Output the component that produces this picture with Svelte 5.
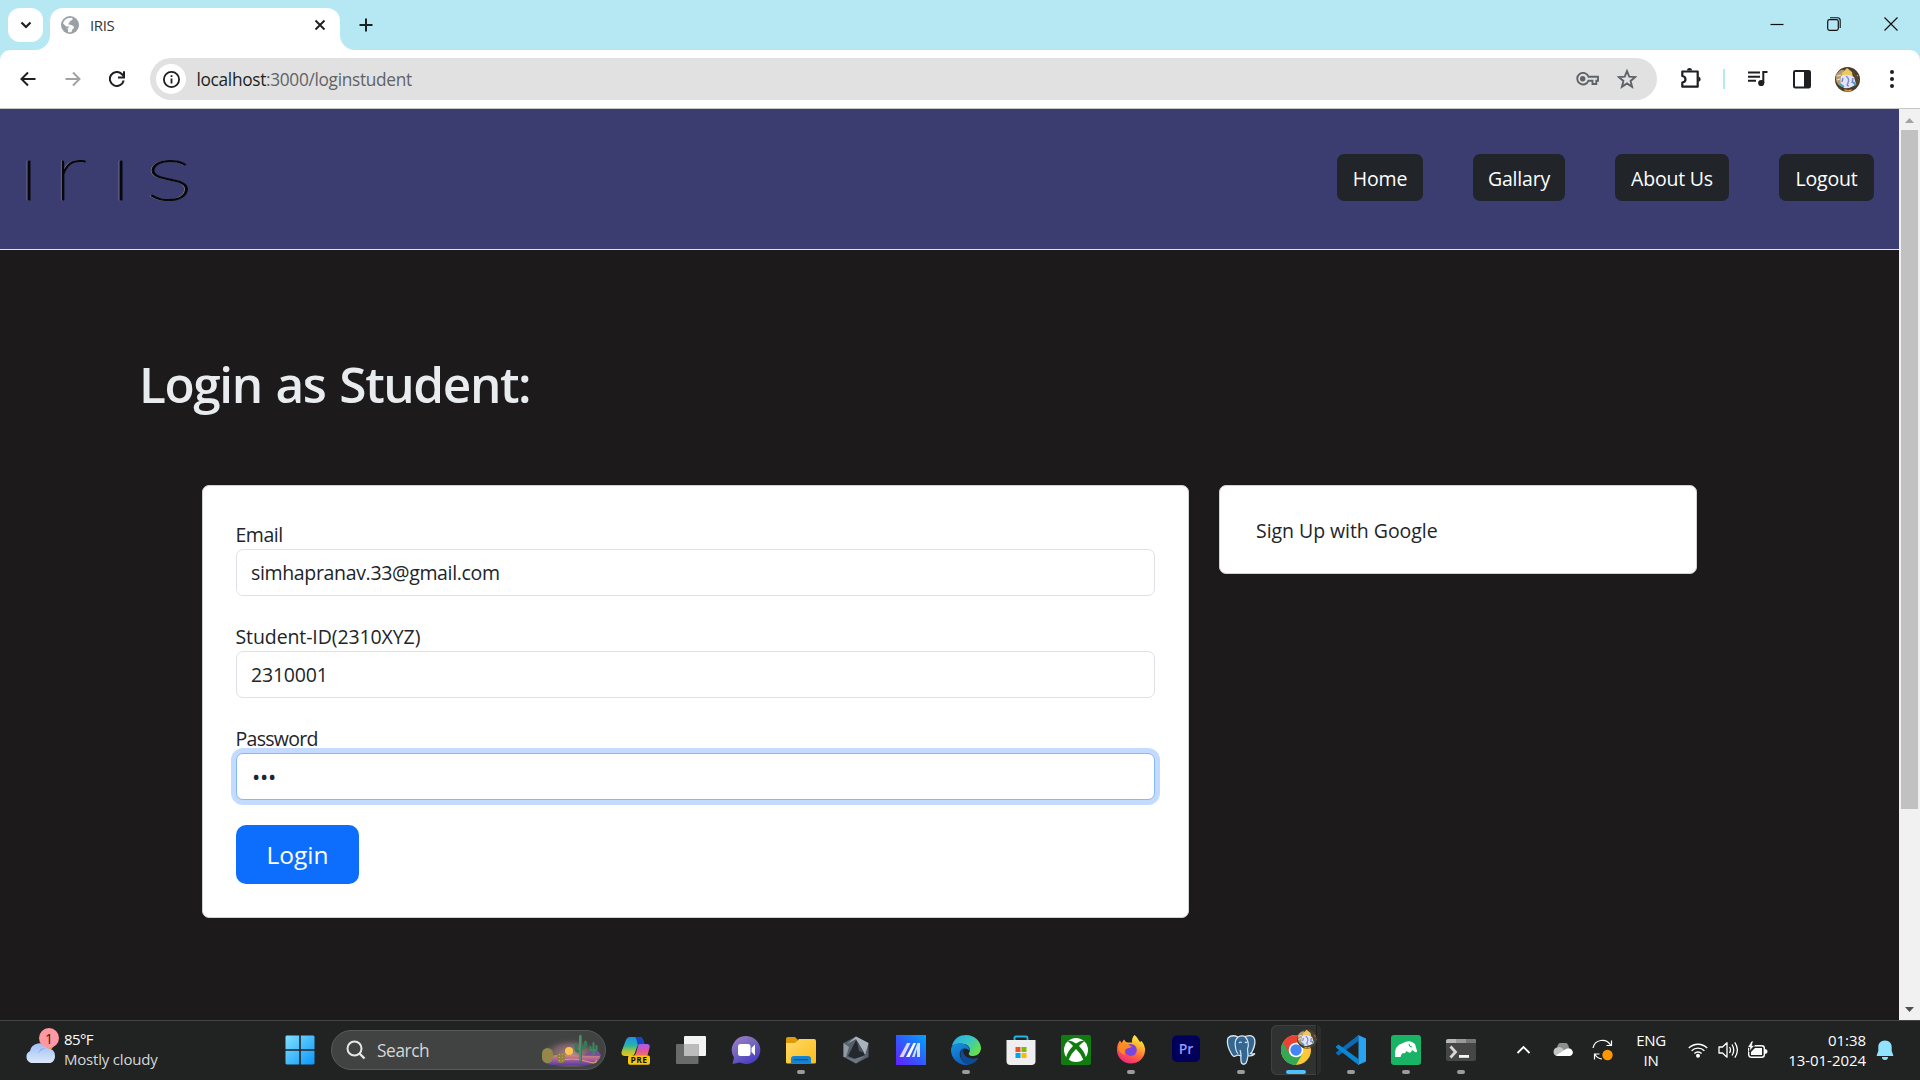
<script>
  const links = [
    { label: 'Home', cls: 'home' },
    { label: 'Gallary', cls: 'gallary' },
    { label: 'About Us', cls: 'about' },
    { label: 'Logout', cls: 'logout' }
  ];
  const fields = [
    { label: 'Email', value: 'simhapranav.33@gmail.com', cls: 'email' },
    { label: 'Student-ID(2310XYZ)', value: '2310001', cls: 'sid' },
    { label: 'Password', value: '•••', cls: 'focused' }
  ];
  const apps = [
    { id: 'copilot' }, { id: 'taskview' }, { id: 'chat' }, { id: 'files', open: true },
    { id: 'armoury' }, { id: 'myasus' }, { id: 'edge', open: true }, { id: 'store' },
    { id: 'xbox' }, { id: 'firefox', open: true }, { id: 'premiere' }, { id: 'postgres', open: true },
    { id: 'chrome', active: true }, { id: 'vscode', open: true }, { id: 'moqups', open: true }, { id: 'terminal', open: true }
  ];
</script>

{#snippet portrait()}
  <circle cx="12.5" cy="12.5" r="12.5" fill="#4a3c2c" />
  <path d="M1 8Q5 2 9 3L7 20Q2 18 1 13Z" fill="#b39a72" />
  <path d="M2 9L6 8M2 13L5 12M19 8L23 9M20 13H24" stroke="#efe3cd" stroke-width="1.200" />
  <path d="M18 4Q24 9 24 15L18 22Z" fill="#54452d" />
  <path d="M7 6L12 1L17 5L18 11L7 10Z" fill="#ecc860" />
  <path d="M6 9Q12 6 19 10L21 17Q16 22 9 21Q4 18 6 9Z" fill="#e2e5f8" />
  <path d="M11 9Q15 12 13 16Q11 19 14 19M8 11L7 15M18 11L17 16" stroke="#8088cd" stroke-width="1.500" fill="none" />
  <path d="M5 17L9 20M18 15L21 18" stroke="#47a0bd" stroke-width="2" />
  <path d="M9 22Q13 24 17 22L16 24.500H10Z" fill="#dd9b37" />
{/snippet}

{#snippet appIcon(id)}
  <svg class="app-svg" viewBox="0 0 30 30">
    {#if id === 'copilot'}
      <defs>
        <linearGradient id="cpA" x1="0" y1="0" x2="0" y2="1"><stop offset="0" stop-color="#1f8fe8" /><stop offset=".45" stop-color="#2bb3a5" /><stop offset=".75" stop-color="#a8c838" /><stop offset="1" stop-color="#f2c21b" /></linearGradient>
        <linearGradient id="cpB" x1="0" y1="0" x2="0" y2="1"><stop offset="0" stop-color="#a45cf0" /><stop offset=".5" stop-color="#e0559e" /><stop offset="1" stop-color="#f5794c" /></linearGradient>
      </defs>
      <path d="M9 2H19Q21 2 22 5L23.500 9H19Q17 9 16 12L13.500 19Q13 21 10 21H4Q-.5 21 .8 16L4.500 6Q6 2 9 2Z" fill="url(#cpA)" />
      <path d="M14 2H19Q21 2 22 5L23.500 9H19Q17 9 16.500 10Q16 4 14 2Z" fill="#1746c4" />
      <path d="M19 9H26Q29.500 9 28.500 13L26 22H12Q14 21 15 18L17 11Q17.500 9 19 9Z" fill="url(#cpB)" />
      <rect x="7" y="20.500" width="22" height="9.300" rx="2" fill="#fcc70d" />
      <text x="18" y="28.200" class="pre">PRE</text>
    {:else if id === 'taskview'}
      <rect x="8" y="1" width="22" height="20" rx="1" fill="#f3f3f3" />
      <rect x="0" y="9" width="22.500" height="20" rx="1" fill="#6a6a6a" />
      <rect x="8" y="9" width="14.500" height="12" fill="#bcbcbc" />
    {:else if id === 'chat'}
      <defs><linearGradient id="ch" x1="0" y1="0" x2=".6" y2="1"><stop offset="0" stop-color="#9f80c8" /><stop offset=".5" stop-color="#7468bd" /><stop offset="1" stop-color="#4a3fc0" /></linearGradient></defs>
      <path d="M15.500 1A14 14 0 1 1 9 27.500L1.500 29L3 22.500A14 14 0 0 1 15.500 1Z" fill="url(#ch)" />
      <rect x="7" y="9" width="12.500" height="12" rx="2.500" fill="#fff" />
      <path d="M20.500 13L24 9.500V20.500L20.500 17Z" fill="#fff" />
    {:else if id === 'files'}
      <defs><linearGradient id="fo" x1="0" y1="0" x2="1" y2="1"><stop offset="0" stop-color="#ffd965" /><stop offset="1" stop-color="#fbbd1e" /></linearGradient></defs>
      <path d="M0 4Q0 2 2 2H9L12 5L9 9H0Z" fill="#dd9a0a" />
      <path d="M0 8H9L13 4H28Q30 4 30 6V27Q30 28.500 28.500 28.500H1.500Q0 28.500 0 27Z" fill="url(#fo)" />
      <path d="M5 28.500V24Q5 21 8 21H22Q25 21 25 24V28.500Z" fill="#1583d2" />
      <rect x="8" y="24" width="14" height="1.200" rx=".6" fill="#0b5291" />
    {:else if id === 'armoury'}
      <path d="M15 1.500L27.500 8V22L15 28.500L2.500 22V8Z" fill="#56606b" />
      <path d="M15 1.500L27.500 8L24 20L15 4L6 9Z" fill="#aab3bd" />
      <path d="M2.500 8L8 12L5 22L2.500 22Z" fill="#9099a4" />
      <path d="M15 5L7 21L14 24L24 20Z" fill="#23282e" />
      <path d="M16 6L23.500 18L18 16Z" fill="#4b535d" />
      <path d="M4 22L13 24L24 21L15 28.500Z" fill="#6d7782" />
    {:else if id === 'myasus'}
      <defs><linearGradient id="ma" x1="0" y1="1" x2="1" y2="0"><stop offset="0" stop-color="#6420ff" /><stop offset=".5" stop-color="#305cff" /><stop offset="1" stop-color="#00a5ff" /></linearGradient></defs>
      <rect width="30" height="30" fill="url(#ma)" />
      <path d="M3.500 22L11 8H14.500L7.500 22Z" fill="#ddd8ff" />
      <path d="M10 22L17.500 8H20L13.500 22Z" fill="#fff" />
      <path d="M16 22L21.500 8H24V22H21V14L18.500 22Z" fill="#cfe2ff" />
    {:else if id === 'edge'}
      <defs>
        <linearGradient id="eA" x1="0" y1="0" x2="1" y2=".6"><stop offset="0" stop-color="#2aa8e8" /><stop offset=".55" stop-color="#36c7c5" /><stop offset="1" stop-color="#66e04e" /></linearGradient>
        <linearGradient id="eB" x1="0" y1="0" x2=".5" y2="1"><stop offset="0" stop-color="#1994df" /><stop offset="1" stop-color="#0b5fc0" /></linearGradient>
      </defs>
      <path d="M.8 11C3 3 9 0 15 0C24 0 30 7 30 13C30 18 26 21 22 21C18 21 17 19 18.500 17C20 14 17.500 9.500 13 9C7 8 2 10 .8 11Z" fill="url(#eA)" />
      <path d="M0 15C0 10 6 7 11 8.500C15 9 19 12 18.500 16C17 13.500 12 12 9.500 16C7 21 11 28 18 29.700C8 31.500 0 24 0 15Z" fill="url(#eB)" />
      <path d="M11.500 13.500C7 19 10 28 18 29.700C22 29 26 26 27.500 22.500C22 25 12 24 11.500 13.500Z" fill="#0d4c95" />
    {:else if id === 'store'}
      <path d="M8.500 7V3Q8.500 1.500 10 1.500H20Q21.500 1.500 21.500 3V7" fill="none" stroke="#25b4e8" stroke-width="1.900" />
      <path d="M.5 5H29.500V26Q29.500 30 25.500 30H4.500Q.5 30 .5 26Z" fill="#efefef" />
      <rect x="9.500" y="12" width="5" height="5" fill="#f25022" /><rect x="15.500" y="12" width="5" height="5" fill="#7fba00" />
      <rect x="9.500" y="18" width="5" height="5" fill="#00a4ef" /><rect x="15.500" y="18" width="5" height="5" fill="#ffb900" />
    {:else if id === 'xbox'}
      <rect width="30" height="30" rx="2" fill="#107c10" />
      <circle cx="15" cy="15" r="12" fill="#fff" />
      <path d="M6.500 6.500Q9 4.500 15 8.500Q21 4.500 23.500 6.500Q21.500 7 18 11Q24 17 25 23L22.500 25Q20 18.500 15 14Q10 18.500 7.500 25L5 23Q6 17 12 11Q8.500 7 6.500 6.500Z" fill="#107c10" />
    {:else if id === 'firefox'}
      <defs><linearGradient id="ff" x1=".8" y1="0" x2=".3" y2="1"><stop offset="0" stop-color="#fff050" /><stop offset=".3" stop-color="#ffbd2e" /><stop offset=".6" stop-color="#ff6a3a" /><stop offset="1" stop-color="#f0257e" /></linearGradient></defs>
      <path d="M18.500 0C22 3 22.500 5 24 7L25.500 6Q29.500 11 29 16C28.500 23 22.500 28.500 15 28.500C7 28.500 1 22.500 1 15Q1 9 4 5.500L5.500 8L8 4.500Q9 7 12 7.500H16Q15.500 3 18.500 0Z" fill="url(#ff)" />
      <circle cx="14.800" cy="15" r="6" fill="#7a45df" />
      <path d="M2 11Q7 7 13 10L16 12Q12 13 10 14Q7 18 9.500 20Q3 19 2 11Z" fill="#ff8a24" />
    {:else if id === 'premiere'}
      <rect x="1" y=".5" width="28" height="26.500" rx="5" fill="#00005b" />
      <text x="15" y="18.500" class="pr">Pr</text>
    {:else if id === 'postgres'}
      <path d="M2 3Q6-1 12 2Q16 0 19 1.500Q27-1 28.500 4Q30 9 26 17L24.500 18.500Q27 19.500 29 18.500Q26 22 22 20.500Q21.500 25 20 28Q17.500 30.500 15.500 28Q14.500 25 15 21Q12 19.500 10.500 20.500Q7 23 5 18Q0 9 2 3Z" fill="#336791" stroke="#dbe5ee" stroke-width="1.300" />
      <path d="M12 2Q8 6 9.500 12Q10 17 12 18.500M19 1.500Q24 7 21.500 14L22 20M14 15Q15 18 15 21M13 8Q15 6 15.500 8M19 8Q20 6 21 8" fill="none" stroke="#dbe5ee" stroke-width="1.200" />
    {:else if id === 'chrome'}
      <circle cx="15" cy="15" r="15" fill="#fcc934" />
      <path d="M15 15L2 7.500A15 15 0 0 0 15 30L21.500 18.700Z" fill="#34a853" />
      <path d="M2 7.500A15 15 0 0 1 28 7.500H15L8.500 18.700Z" fill="#ea4335" />
      <circle cx="15" cy="15" r="7.300" fill="#fff" /><circle cx="15" cy="15" r="5.700" fill="#4285f4" />
    {:else if id === 'vscode'}
      <path d="M0 18.500L2.500 20.500L22.500 6V0L.5 17Q-.2 17.800 0 18.500Z" fill="#0a6cb8" />
      <path d="M0 11.500L2.500 9.500L22.500 24V30L.5 13Q-.2 12.200 0 11.500Z" fill="#0a86d4" />
      <path d="M22 0L30 3.500V26.500L22 30Q22.500 29 22.500 27.500V2.500Q22.500 1 22 0Z" fill="#27a3f0" />
    {:else if id === 'moqups'}
      <rect width="30" height="30" rx="3" fill="#19b366" />
      <path d="M4 22Q3 10 12 8Q17 5 21 7L24 9L26 16Q26 18 24 17L21 15Q20 19 17 17L15 16Q15 19 12 18Q10 19 9.500 22Z" fill="#fff" />
      <path d="M18 9Q18 12 21 12" stroke="#19b366" fill="none" />
    {:else if id === 'terminal'}
      <path d="M0 6Q0 4 2 4H28Q30 4 30 6V8H0Z" fill="#b8b8b8" /><path d="M10 4H20V8H10Z" fill="#999" /><path d="M20 4H28Q30 4 30 6V8H20Z" fill="#777" />
      <path d="M0 8H30V24Q30 26 28 26H2Q0 26 0 24Z" fill="#464646" />
      <path d="M4.500 11.500L9.500 17L4.500 22.500" fill="none" stroke="#d8d8d8" stroke-width="2.800" /><rect x="13" y="20" width="10" height="2.800" fill="#f5f5f5" />
    {/if}
  </svg>
{/snippet}

<div class="screen">
  <header class="tabstrip">
    <button class="tabsearch" aria-label="Search tabs"><svg width="12" height="8" viewBox="0 0 12 8"><path d="M1.500 1.500L6 6L10.500 1.500" fill="none" stroke="#1d1f22" stroke-width="2.200" /></svg></button>
    <div class="tab">
      <svg class="globe" width="18" height="18" viewBox="0 0 18 18"><circle cx="9" cy="9" r="9" fill="#9aa0a6" /><path d="M11 1.800Q12.500 3.500 10.500 4.500Q8.500 4.500 8.500 6.500Q7 7.500 7.500 8.500Q10 8.500 11.500 9.500Q13.500 10 13 12Q11 13 10.500 16Q8 16.500 7 16V13Q4 12.500 4.500 10L2 7.500Q3 3 7.500 2Z" fill="#fff" opacity=".95" /><path d="M2 8L5 10.500H8L7 13L6 12L4.500 14" fill="#9aa0a6" /></svg>
      <span class="tabname">IRIS</span>
      <svg class="tabclose" width="12" height="12" viewBox="0 0 12 12"><path d="M1.500 1.500L10.500 10.500M10.500 1.500L1.500 10.500" stroke="#1d1f22" stroke-width="1.900" /></svg>
    </div>
    <svg class="plus" width="14" height="14" viewBox="0 0 14 14"><path d="M7 .5V13.500M.5 7H13.500" stroke="#1d1f22" stroke-width="2" /></svg>
    <div class="winctl">
      <svg width="14" height="14" viewBox="0 0 14 14"><path d="M.5 7.500H13.500" stroke="#111" stroke-width="1.200" /></svg>
      <svg width="14" height="14" viewBox="0 0 14 14"><rect x=".7" y="2.700" width="10.600" height="10.600" rx="1.800" fill="none" stroke="#111" stroke-width="1.200" /><path d="M3 .8H10.500Q13.200 .8 13.200 3.500V11" fill="none" stroke="#111" stroke-width="1.100" /></svg>
      <svg width="14" height="14" viewBox="0 0 14 14"><path d="M.5 .5L13.500 13.500M13.500 .5L.5 13.500" stroke="#111" stroke-width="1.200" /></svg>
    </div>
  </header>

  <div class="toolbarwrap">
    <div class="toolbar">
      <svg class="ic back" width="16" height="16" viewBox="0 0 16 16"><path d="M15.500 8H2M8 1.500L1.500 8L8 14.500" fill="none" stroke="#1d1f22" stroke-width="2" /></svg>
      <svg class="ic fwd" width="16" height="16" viewBox="0 0 16 16"><path d="M.5 8H14M8 1.500L14.500 8L8 14.500" fill="none" stroke="#a3a3a3" stroke-width="2" /></svg>
      <svg class="ic reload" width="16" height="16" viewBox="0 0 16 16"><path d="M14.700 9.500A7 7 0 1 1 13 3.200L14.500 5" fill="none" stroke="#1d1f22" stroke-width="2" /><path d="M15 .3V6.500H9" fill="none" stroke="#1d1f22" stroke-width="2" /></svg>
      <div class="omnibox">
        <span class="info"><svg width="17" height="17" viewBox="0 0 17 17"><circle cx="8.500" cy="8.500" r="7.600" fill="none" stroke="#1d1f22" stroke-width="1.800" /><path d="M8.500 7.500V12.500M8.500 4.300V6.100" stroke="#1d1f22" stroke-width="1.800" /></svg></span>
        <span class="url"><b>localhost</b>:3000/loginstudent</span>
        <svg class="key" width="23" height="14" viewBox="0 0 23 14"><path d="M12.500 4.700H22V8.700H20.300V12H16.500V8.700H12.500A5.800 5.800 0 1 1 12.500 4.700Z" fill="none" stroke="#5f6368" stroke-width="1.900" /><circle cx="6.700" cy="6.800" r="2.700" fill="#5f6368" /></svg>
        <svg class="star" width="20" height="20" viewBox="0 0 20 20"><path d="M10 2L12.200 7.600L18.300 8L13.600 11.900L15.100 17.800L10 14.500L4.900 17.800L6.400 11.900L1.700 8L7.800 7.600Z" fill="none" stroke="#5f6368" stroke-width="1.900" /></svg>
      </div>
      <svg class="puzzle" width="22" height="22" viewBox="0 0 22 22"><path d="M2.300 3.500H17.700V18.700H2.300V14.500Q5.500 14 5.500 11.200Q5.500 8.500 2.300 8Z" fill="none" stroke="#1d1f22" stroke-width="2.200" stroke-linejoin="round" /><path d="M7 2.500A2.500 2.500 0 0 1 12 2.500ZM18.500 8.500A2.700 2.700 0 0 1 18.500 13.800Z" fill="#1d1f22" /></svg>
      <i class="sep"></i>
      <svg class="music" width="20" height="16" viewBox="0 0 20 16"><path d="M0 1.600H12M0 5.700H12M0 9.800H8" stroke="#1d1f22" stroke-width="2" /><path d="M15.300 12V1.100H19.500" fill="none" stroke="#1d1f22" stroke-width="2" /><circle cx="13.200" cy="12" r="3.100" fill="#1d1f22" /></svg>
      <svg class="panel" width="18" height="20" viewBox="0 0 18 20"><rect x="1" y="2" width="16" height="16.500" rx="1.300" fill="#fff" stroke="#1d1f22" stroke-width="2" /><path d="M11 2H17V18H11Z" fill="#1d1f22" /></svg>
      <svg class="avatar" width="25" height="25" viewBox="0 0 25 25">{@render portrait()}</svg>
      <svg class="dots" width="4" height="18" viewBox="0 0 4 18"><circle cx="2" cy="2" r="2" /><circle cx="2" cy="9" r="2" /><circle cx="2" cy="16" r="2" /></svg>
    </div>
  </div>

  <div class="viewport">
    <main class="page">
      <nav class="nav">
        <svg class="logo" width="176" height="60" viewBox="0 0 176 60">
          {#each ['lite', 'dark'] as tone}
            <g class={tone}>
              <text transform="translate(-3.5 50) scale(1.42 1)">ı</text>
              <text transform="translate(33 50) scale(1.2 1)">r</text>
              <text transform="translate(88.5 50) scale(1.42 1)">ı</text>
              <text transform="translate(124.5 50) scale(1.43 1)">s</text>
            </g>
          {/each}
        </svg>
        <div class="links">
          {#each links as l}<a href="#top" class={l.cls}>{l.label}</a>{/each}
        </div>
      </nav>
      <h1>Login as Student:</h1>
      <div class="cards">
        <form class="card">
          {#each fields as f}
            <label class="field {f.cls}"><span>{f.label}</span><input type="text" value={f.value} /></label>
          {/each}
          <button class="login" type="button">Login</button>
        </form>
        <aside class="card google"><span>Sign Up with Google</span></aside>
      </div>
    </main>
    <div class="scroll">
      <svg width="21" height="21" viewBox="0 0 21 21"><path d="M6 14L10.500 9L15 14Z" fill="#a3a3a3" /></svg>
      <i class="thumb"></i>
      <svg width="21" height="21" viewBox="0 0 21 21"><path d="M6 8L10.500 13L15 8Z" fill="#505050" /></svg>
    </div>
  </div>

  <footer class="taskbar">
    <div class="weather">
      <svg width="40" height="40" viewBox="0 0 40 40">
        <defs><linearGradient id="cl" x1="0" y1="0" x2="0" y2="1"><stop offset="0" stop-color="#9ebef5" /><stop offset="1" stop-color="#dce8fb" /></linearGradient></defs>
        <circle cx="24" cy="17" r="6" fill="#f88a1c" />
        <path d="M7 36A6.500 6.500 0 0 1 6 24A9.500 9.500 0 0 1 23.500 21Q31 22 31 29A6.500 6.500 0 0 1 26 36Z" fill="url(#cl)" />
        <path d="M14 27Q16 20 22 21Q17 22 14 27Z" fill="#7fa8ea" />
        <circle cx="25" cy="11" r="10" fill="#ff98a2" /><text x="25" y="16.500" class="badge">1</text>
      </svg>
      <div class="wtext"><span class="temp">85°F</span><span class="cond">Mostly cloudy</span></div>
    </div>
    <svg class="start" width="30" height="30" viewBox="0 0 30 30">
      <defs><linearGradient id="wn" x1="0" y1="0" x2="1" y2="1"><stop offset="0" stop-color="#82e0ff" /><stop offset="1" stop-color="#0a97fb" /></linearGradient></defs>
      <path d="M1.500 .5H14.200V14.200H.5V1.500ZM15.800 .5H28.500L29.500 1.500V14.200H15.800ZM.5 15.800H14.200V29.500H1.500L.5 28.500ZM15.800 15.800H29.500V28.500L28.500 29.500H15.800Z" fill="url(#wn)" />
    </svg>
    <div class="search">
      <svg class="mag" width="20" height="20" viewBox="0 0 20 20"><circle cx="8.500" cy="8.500" r="7" fill="none" stroke="#e6e6e6" stroke-width="2" /><path d="M13.500 13.500L18.500 18.500" stroke="#e6e6e6" stroke-width="2.400" /></svg>
      <span>Search</span>
      <svg class="desert" width="62" height="34" viewBox="0 0 62 34">
        <defs><radialGradient id="sky" cx=".5" cy=".6" r=".5"><stop offset="0" stop-color="#b98d90" /><stop offset=".6" stop-color="#80666c" stop-opacity=".8" /><stop offset="1" stop-color="#454545" stop-opacity="0" /></radialGradient>
        <linearGradient id="sand" x1="0" y1="0" x2="0" y2="1"><stop offset="0" stop-color="#d98a75" /><stop offset=".45" stop-color="#a7629b" /><stop offset="1" stop-color="#5c3f9c" /></linearGradient></defs>
        <ellipse cx="31" cy="18" rx="31" ry="17" fill="url(#sky)" />
        <path d="M43 23L52 17L58 18L61 22L60 26H43Z" fill="#7a4d9d" />
        <path d="M2 25Q15 21 30 22T60 23Q59 31 48 32H12Q3 31 2 25Z" fill="url(#sand)" />
        <path d="M20 28Q32 24 45 28T56 27" stroke="#e59a76" stroke-width="1.200" fill="none" />
        <circle cx="29" cy="18" r="4" fill="#ffc34e" />
        <rect x="2" y="15" width="11" height="15" rx="5.500" fill="#8a8c48" /><path d="M4.500 18V28M7.500 16V29M10.500 18V28" stroke="#d06a58" stroke-width="1" stroke-dasharray="1.500 2" />
        <rect x="17" y="20" width="8" height="10" rx="4" fill="#90843f" /><path d="M19.500 21V29M22.500 21V29" stroke="#d9a055" stroke-width="1" stroke-dasharray="1 2" />
        <path d="M40.500 28V3M36 12V16Q36 18.500 40 18.500M45.500 9V12Q45.500 15 41 15" stroke="#347c57" stroke-width="3" stroke-linecap="round" fill="none" />
        <path d="M40 28V3" stroke="#5cab7d" stroke-width="1" />
        <path d="M53.500 22V10M50.500 14V17H56.500V13" stroke="#3a8a62" stroke-width="2" stroke-linecap="round" stroke-linejoin="round" fill="none" />
      </svg>
    </div>
    <div class="apps">
      {#each apps as a}
        <div class="app" class:open={a.open} class:active={a.active}>
          {@render appIcon(a.id)}
          {#if a.active}<svg class="mini" width="20" height="20" viewBox="0 0 25 25">{@render portrait()}</svg>{/if}
        </div>
      {/each}
    </div>
    <div class="tray">
      <svg class="chev" width="15" height="10" viewBox="0 0 15 10"><path d="M1.500 8L7.500 2L13.500 8" fill="none" stroke="#fff" stroke-width="1.800" /></svg>
      <svg class="cloud" width="20" height="14" viewBox="0 0 20 14"><path d="M4 5A6 6 0 0 1 16 5L10 10Z" fill="#8e8e8e" /><path d="M4 13A4.300 4.300 0 0 1 4.500 4.500Q8 3 11 7L13 13Z" fill="#c4c4c4" /><path d="M3 12.500L13 6Q18 4 19.500 8A3.500 3.500 0 0 1 17 13H5Z" fill="#fff" /></svg>
      <svg class="sync" width="22" height="22" viewBox="0 0 22 22"><path d="M1 9A9.500 9.500 0 0 1 18.500 6M19.500 1.500V6.500H14.500M10 20A9 9 0 0 1 3 15.500M2.500 20.500V15H7.500" fill="none" stroke="#fff" stroke-width="1.200" /><circle cx="15.500" cy="16" r="5.200" fill="#ff9800" /></svg>
      <div class="lang"><span>ENG</span><span>IN</span></div>
      <svg class="wifi" width="20" height="16" viewBox="0 0 20 16"><path d="M.8 6A13 13 0 0 1 19.200 6M3.600 8.800A9 9 0 0 1 16.400 8.800M6.400 11.600A5 5 0 0 1 13.600 11.600" fill="none" stroke="#fff" stroke-width="1.400" /><circle cx="10" cy="13.800" r="2" fill="#fff" /></svg>
      <svg class="vol" width="21" height="18" viewBox="0 0 21 18"><path d="M1 6H4.500L9 1.800V16.200L4.500 12H1Z" fill="none" stroke="#fff" stroke-width="1.300" stroke-linejoin="round" /><path d="M11.500 6Q13.500 9 11.500 12M14 3.500Q17.500 9 14 14.500M16.800 1.300Q22 9 16.800 16.700" fill="none" stroke="#fff" stroke-width="1.300" /></svg>
      <svg class="bat" width="21" height="18" viewBox="0 0 21 18"><rect x="1.700" y="4.700" width="15.600" height="11.600" rx="2.500" fill="none" stroke="#fff" stroke-width="1.400" /><path d="M8 7H15V14H4V11Z" fill="#fff" /><path d="M18.500 8.500Q20 8.500 20 10.500T18.500 12.500Z" fill="#fff" stroke="#fff" /><path d="M4.500 0L.5 6.500H3L2 11L7.500 4.500H5L6.500 0Z" fill="#fff" stroke="#222" stroke-width=".8" /></svg>
      <div class="clock"><span>01:38</span><span class="date">13-01-2024</span></div>
      <svg class="bell" width="18" height="20" viewBox="0 0 18 20"><path d="M9 .5C4.500 .5 2.300 3.500 2.300 7V11L.8 15V16H17.200V15L15.700 11V7C15.700 3.500 13.500 .5 9 .5ZM6 17H12A3 3 0 0 1 6 17Z" fill="#90e2ff" /></svg>
    </div>
  </footer>
</div>

<style>
  :global(body) { margin: 0; background: #1c1a1b; }
  .screen { width: 1920px; height: 1080px; display: grid; grid-template-rows: 50px 59px 911px 60px; overflow: hidden; font-family: 'Open Sans', 'Noto Sans', sans-serif; }
  svg { display: block; flex: none; }

  .tabstrip { background: #b5e8f3; display: flex; align-items: flex-start; padding-left: 8px; }
  .tabsearch { width: 35px; height: 34px; margin-top: 8px; border: 0; border-radius: 12px; background: #fff; display: flex; align-items: center; justify-content: center; padding: 0; }
  .tab { position: relative; width: 290px; height: 42px; margin: 8px 0 0 7px; background: #fff; border-radius: 13px 13px 0 0; display: flex; align-items: center; padding: 0 14px 8px 11px; box-sizing: border-box; }
  .tab::before, .tab::after { content: ''; position: absolute; bottom: 0; width: 15px; height: 15px; }
  .tab::before { left: -15px; background: radial-gradient(circle at 0 0, transparent 14.5px, #fff 15.500px); }
  .tab::after { right: -15px; background: radial-gradient(circle at 100% 0, transparent 14.5px, #fff 15.500px); }
  .tabname { font-size: 15px; color: #333; margin-left: 11px; letter-spacing: -.4px; }
  .tabclose { margin-left: auto; }
  .plus { margin: 18px 0 0 18.500px; }
  .winctl { margin: 17px 22px 0 auto; display: flex; gap: 43px; }

  .toolbarwrap { background: #b5e8f3; }
  .toolbar { height: 59px; box-sizing: border-box; background: #fff; border-bottom: 1px solid #c3c8c6; border-radius: 10px 10px 0 0; display: flex; align-items: center; padding: 0 26px 0 20px; }
  .fwd { margin-left: 29px; }
  .reload { margin-left: 28px; }
  .omnibox { margin-left: 25px; width: 1507px; height: 42px; box-sizing: border-box; border-radius: 21px; background: #e1e1e1; display: flex; align-items: center; padding: 0 20px 0 6px; }
  .info { width: 30px; height: 30px; border-radius: 50%; background: #fff; display: flex; align-items: center; justify-content: center; }
  .url { font-size: 17.300px; color: #5f6368; margin-left: 10.500px; letter-spacing: -.32px; }
  .url b { font-weight: 400; color: #1d1f22; }
  .key { margin-left: auto; }
  .star { margin-left: 18px; }
  .puzzle { margin-left: 23px; }
  .sep { width: 2px; height: 20px; background: #b5e8f3; margin-left: 21px; }
  .music { margin-left: 23px; }
  .panel { margin-left: 25px; }
  .avatar { margin-left: 24px; }
  .dots { margin-left: auto; fill: #1d1f22; }

  .viewport { display: flex; overflow: hidden; }
  .page { width: 1899px; background: #1c1a1b; }
  .nav { height: 141px; box-sizing: border-box; border-bottom: 1px solid #e4dff0; background: #3b3d70; display: flex; justify-content: space-between; padding: 0 25px 0 20px; }
  .logo { margin-top: 41px; overflow: visible; font-family: Lato, sans-serif; font-weight: 100; }
  .logo text { font-size: 81px; stroke-linejoin: round; }
  .lite { fill: #8a8b98; stroke: #7e7f8e; stroke-width: .9; transform: translate(-.6px, -.5px); }
  .dark { fill: #08080c; stroke: #08080c; stroke-width: 1.200; transform: translate(.5px, .4px); }
  .links { display: flex; gap: 50px; margin-top: 45px; }
  .links a { height: 47px; border-radius: 7px; background: #212529; color: #fff; font-size: 19.500px; line-height: 49px; text-align: center; text-decoration: none; letter-spacing: -.2px; }
  .home { width: 86px; }
  .gallary { width: 92px; }
  .about { width: 114px; }
  .logout { width: 95px; }
  h1 { margin: 104px 0 0 139px; font-size: 49.500px; line-height: 60px; font-weight: 600; color: #e9ecef; letter-spacing: -1.400px; word-spacing: 2.300px; height: 131px; }
  .cards { display: flex; align-items: flex-start; gap: 30px; padding-left: 202px; }
  .card { box-sizing: border-box; border: 1px solid #d2d2d2; border-radius: 7px; background: #fff; width: 987px; height: 433px; padding: 33px; display: flex; flex-direction: column; gap: 25px; color: #212529; font-size: 19.500px; }
  .google { width: 478px; height: 89px; padding: 29px 36px; line-height: 32px; letter-spacing: -.05px; }
  .field { display: flex; flex-direction: column; height: 77px; }
  .field span { height: 30px; line-height: 32px; letter-spacing: -.1px; margin-left: -.5px; }
  .email span { letter-spacing: -.5px; }
  .focused span { letter-spacing: -.7px; }
  .field input { height: 47px; box-sizing: border-box; border: 1px solid #dee2e6; border-radius: 7px; padding: 0 14px; font: inherit; color: #212529; outline: 0; background: #fff; letter-spacing: -.34px; }
  .sid input { letter-spacing: -.2px; }
  .focused input { border-color: #86b7fe; box-shadow: 0 0 0 5px #c2dbfe; font-size: 22px; letter-spacing: -.3px; padding: 0 15px 2px; }
  .login { width: 123px; height: 59px; border: 0; border-radius: 10px; background: #0d6efd; color: #fff; font: 24.500px/58px 'Open Sans', sans-serif; padding: 1px 0 0; }

  .scroll { width: 21px; background: #f1f1f1; display: flex; flex-direction: column; }
  .thumb { width: 17px; height: 679px; margin: 0 0 auto 2px; background: #c1c1c1; }

  .taskbar { background: #212322; border-top: 1px solid #454545; box-sizing: border-box; display: flex; align-items: flex-start; color: #fff; }
  .weather { width: 285px; height: 59px; display: flex; padding: 6px 0 0 24px; box-sizing: border-box; }
  .wtext { display: flex; flex-direction: column; font-size: 15px; line-height: 20px; padding-top: 2px; }
  .temp { letter-spacing: -.6px; }
  .cond { color: #d6d6d6; letter-spacing: -.2px; white-space: nowrap; }
  .badge { font-size: 14px; text-anchor: middle; fill: #31181c; }
  .start { margin-top: 14px; }
  .search { width: 275px; height: 40px; margin: 9px 0 0 16px; box-sizing: border-box; border: 1px solid #595a5a; border-radius: 20px; background: #414342; display: flex; align-items: center; padding: 0 3px 0 14px; }
  .search span { font-size: 17.300px; color: #d6d6d6; margin-left: 11px; letter-spacing: -.4px; }
  .desert { margin-left: auto; }
  .apps { display: flex; gap: 5px; margin-left: 5px; }
  .app { position: relative; width: 50px; height: 50px; margin-top: 4px; display: flex; align-items: center; justify-content: center; box-sizing: border-box; }
  .app-svg { width: 30px; height: 30px; }
  .app.open::after, .app.active::after { content: ''; position: absolute; bottom: 1px; left: 21px; width: 8px; height: 4px; border-radius: 2px; background: #9b9b9b; }
  .app.active { background: #303231; box-shadow: inset 0 0 0 1px #3f4040; border-radius: 6px; }
  .app.active::before { content: ''; position: absolute; right: 0; top: 0; width: 5px; height: 50px; box-sizing: border-box; border-left: 1px solid #1c1c1c; background: #2b2d2c; border-radius: 0 6px 6px 0; }
  .app.active::after { left: 15px; width: 20px; background: #4cc2ff; }
  .mini { position: absolute; right: 4px; top: 4px; }
  .pre { font: 700 8.500px 'Open Sans', sans-serif; text-anchor: middle; fill: #111; letter-spacing: .4px; }
  .pr { font: 600 14px 'Open Sans', sans-serif; text-anchor: middle; fill: #9999ff; }
  .tray { display: flex; align-items: center; height: 59px; box-sizing: border-box; margin-left: auto; padding: 0 26px 2px 0; }
  .cloud { margin-left: 22px; }
  .sync { margin-left: 19px; }
  .lang { width: 40px; margin-left: 17px; display: flex; flex-direction: column; align-items: center; font-size: 15px; line-height: 20px; letter-spacing: -.3px; }
  .wifi { margin-left: 17px; }
  .vol { margin-left: 10px; }
  .bat { margin-left: 8px; }
  .clock { width: 84px; margin-left: 14px; display: flex; flex-direction: column; align-items: flex-end; font-size: 15px; line-height: 20px; letter-spacing: -.05px; }
  .bell { margin-left: 10px; }
</style>
